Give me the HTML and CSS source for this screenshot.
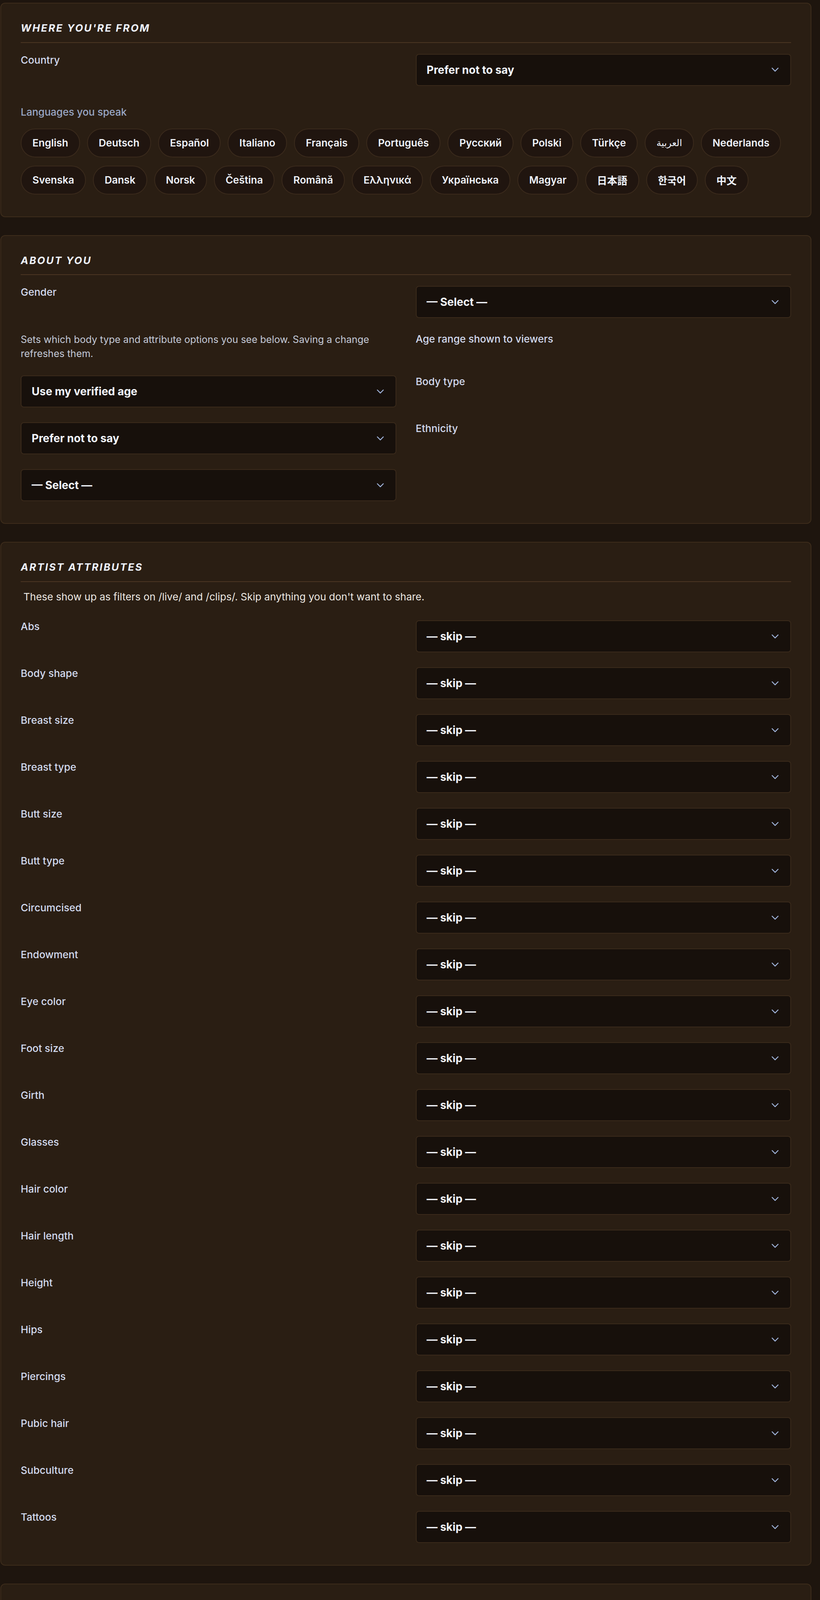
FILE: index.html
```html
<!DOCTYPE html>
<html lang="en">
<head>
<meta charset="utf-8">
<title>Profile</title>
<link rel="stylesheet" href="styles.css">
</head>
<body>
<main class="page">

  <section class="card">
    <h2 class="card-title">Where you're from</h2>
    <div class="grid">
      <div class="label">Country</div>
      <div class="select"><span>Prefer not to say</span><svg class="chev" viewBox="0 0 18 11" width="18" height="11"><polyline points="1.5,1.5 9,9.2 16.5,1.5"/></svg></div>
    </div>
    <div class="langs-label">Languages you speak</div>
    <div class="chips">
      <span class="chip">English</span>
      <span class="chip">Deutsch</span>
      <span class="chip">Español</span>
      <span class="chip">Italiano</span>
      <span class="chip">Français</span>
      <span class="chip">Português</span>
      <span class="chip">Русский</span>
      <span class="chip">Polski</span>
      <span class="chip">Türkçe</span>
      <span class="chip chip-ar" lang="ar">العربية</span>
      <span class="chip">Nederlands</span>
      <span class="chip">Svenska</span>
      <span class="chip">Dansk</span>
      <span class="chip">Norsk</span>
      <span class="chip">Čeština</span>
      <span class="chip">Română</span>
      <span class="chip">Ελληνικά</span>
      <span class="chip">Українська</span>
      <span class="chip">Magyar</span>
      <span class="chip" lang="ja">日本語</span>
      <span class="chip" lang="ko">한국어</span>
      <span class="chip" lang="zh">中文</span>
    </div>
  </section>

  <section class="card">
    <h2 class="card-title">About you</h2>
    <div class="grid">
      <div class="label">Gender</div>
      <div class="select"><span>— Select —</span><svg class="chev" viewBox="0 0 18 11" width="18" height="11"><polyline points="1.5,1.5 9,9.2 16.5,1.5"/></svg></div>
      <p class="hint">Sets which body type and attribute options you see below. Saving a change refreshes them.</p>
      <div class="label">Age range shown to viewers</div>
      <div class="select"><span>Use my verified age</span><svg class="chev" viewBox="0 0 18 11" width="18" height="11"><polyline points="1.5,1.5 9,9.2 16.5,1.5"/></svg></div>
      <div class="label">Body type</div>
      <div class="select"><span>Prefer not to say</span><svg class="chev" viewBox="0 0 18 11" width="18" height="11"><polyline points="1.5,1.5 9,9.2 16.5,1.5"/></svg></div>
      <div class="label">Ethnicity</div>
      <div class="select"><span>— Select —</span><svg class="chev" viewBox="0 0 18 11" width="18" height="11"><polyline points="1.5,1.5 9,9.2 16.5,1.5"/></svg></div>
    </div>
  </section>

  <section class="card">
    <h2 class="card-title">Artist attributes</h2>
    <p class="desc">These show up as filters on /live/ and /clips/. Skip anything you don't want to share.</p>
    <div class="grid">
      <div class="label">Abs</div>
      <div class="select"><span>— skip —</span><svg class="chev" viewBox="0 0 18 11" width="18" height="11"><polyline points="1.5,1.5 9,9.2 16.5,1.5"/></svg></div>
      <div class="label">Body shape</div>
      <div class="select"><span>— skip —</span><svg class="chev" viewBox="0 0 18 11" width="18" height="11"><polyline points="1.5,1.5 9,9.2 16.5,1.5"/></svg></div>
      <div class="label">Breast size</div>
      <div class="select"><span>— skip —</span><svg class="chev" viewBox="0 0 18 11" width="18" height="11"><polyline points="1.5,1.5 9,9.2 16.5,1.5"/></svg></div>
      <div class="label">Breast type</div>
      <div class="select"><span>— skip —</span><svg class="chev" viewBox="0 0 18 11" width="18" height="11"><polyline points="1.5,1.5 9,9.2 16.5,1.5"/></svg></div>
      <div class="label">Butt size</div>
      <div class="select"><span>— skip —</span><svg class="chev" viewBox="0 0 18 11" width="18" height="11"><polyline points="1.5,1.5 9,9.2 16.5,1.5"/></svg></div>
      <div class="label">Butt type</div>
      <div class="select"><span>— skip —</span><svg class="chev" viewBox="0 0 18 11" width="18" height="11"><polyline points="1.5,1.5 9,9.2 16.5,1.5"/></svg></div>
      <div class="label">Circumcised</div>
      <div class="select"><span>— skip —</span><svg class="chev" viewBox="0 0 18 11" width="18" height="11"><polyline points="1.5,1.5 9,9.2 16.5,1.5"/></svg></div>
      <div class="label">Endowment</div>
      <div class="select"><span>— skip —</span><svg class="chev" viewBox="0 0 18 11" width="18" height="11"><polyline points="1.5,1.5 9,9.2 16.5,1.5"/></svg></div>
      <div class="label">Eye color</div>
      <div class="select"><span>— skip —</span><svg class="chev" viewBox="0 0 18 11" width="18" height="11"><polyline points="1.5,1.5 9,9.2 16.5,1.5"/></svg></div>
      <div class="label">Foot size</div>
      <div class="select"><span>— skip —</span><svg class="chev" viewBox="0 0 18 11" width="18" height="11"><polyline points="1.5,1.5 9,9.2 16.5,1.5"/></svg></div>
      <div class="label">Girth</div>
      <div class="select"><span>— skip —</span><svg class="chev" viewBox="0 0 18 11" width="18" height="11"><polyline points="1.5,1.5 9,9.2 16.5,1.5"/></svg></div>
      <div class="label">Glasses</div>
      <div class="select"><span>— skip —</span><svg class="chev" viewBox="0 0 18 11" width="18" height="11"><polyline points="1.5,1.5 9,9.2 16.5,1.5"/></svg></div>
      <div class="label">Hair color</div>
      <div class="select"><span>— skip —</span><svg class="chev" viewBox="0 0 18 11" width="18" height="11"><polyline points="1.5,1.5 9,9.2 16.5,1.5"/></svg></div>
      <div class="label">Hair length</div>
      <div class="select"><span>— skip —</span><svg class="chev" viewBox="0 0 18 11" width="18" height="11"><polyline points="1.5,1.5 9,9.2 16.5,1.5"/></svg></div>
      <div class="label">Height</div>
      <div class="select"><span>— skip —</span><svg class="chev" viewBox="0 0 18 11" width="18" height="11"><polyline points="1.5,1.5 9,9.2 16.5,1.5"/></svg></div>
      <div class="label">Hips</div>
      <div class="select"><span>— skip —</span><svg class="chev" viewBox="0 0 18 11" width="18" height="11"><polyline points="1.5,1.5 9,9.2 16.5,1.5"/></svg></div>
      <div class="label">Piercings</div>
      <div class="select"><span>— skip —</span><svg class="chev" viewBox="0 0 18 11" width="18" height="11"><polyline points="1.5,1.5 9,9.2 16.5,1.5"/></svg></div>
      <div class="label">Pubic hair</div>
      <div class="select"><span>— skip —</span><svg class="chev" viewBox="0 0 18 11" width="18" height="11"><polyline points="1.5,1.5 9,9.2 16.5,1.5"/></svg></div>
      <div class="label">Subculture</div>
      <div class="select"><span>— skip —</span><svg class="chev" viewBox="0 0 18 11" width="18" height="11"><polyline points="1.5,1.5 9,9.2 16.5,1.5"/></svg></div>
      <div class="label">Tattoos</div>
      <div class="select"><span>— skip —</span><svg class="chev" viewBox="0 0 18 11" width="18" height="11"><polyline points="1.5,1.5 9,9.2 16.5,1.5"/></svg></div>
    </div>
  </section>

  <section class="card">
    <h2 class="card-title">Tell viewers about yourself</h2>
    <p class="desc desc-bio">A short intro that shows on your storefront and live cards. Plain-text only — keep it conversational.</p>
    <label class="label bio-label" for="bio">Bio</label>
    <textarea id="bio" class="bio" placeholder="Hey, I'm..."></textarea>
    <div class="counter">0 / 800 characters</div>
  </section>

</main>
</body>
</html>
```

FILE: styles.css
```css
html, body {
  margin: 0;
  background: #1e150e;
}

body {
  font-family: Inter, "Noto Sans CJK SC", "DejaVu Sans", sans-serif;
  color: #f3f6fc;
}

.page {
  display: flex;
  flex-direction: column;
  gap: 46px;
  padding: 7px 22px 20px 1px;
}

.card {
  background: #2a1e13;
  border: 2px solid #3d2c1b;
  border-radius: 12px;
  padding: 47px 50px 56px;
}

.card-title {
  margin: 0 0 28px;
  padding-bottom: 20px;
  border-bottom: 2px solid #4a3522;
  font-size: 26px;
  line-height: 31.5px;
  font-weight: 700;
  font-style: italic;
  letter-spacing: 0.11em;
  text-transform: uppercase;
  color: #eef2fb;
}

.grid {
  display: grid;
  grid-template-columns: 1fr 1fr;
  column-gap: 50px;
  row-gap: 38px;
  align-items: start;
}

.label {
  display: block;
  font-size: 26px;
  font-weight: 500;
  line-height: 31.5px;
  color: #d3dbef;
}

.select {
  height: 82px;
  box-sizing: border-box;
  display: flex;
  align-items: center;
  justify-content: space-between;
  padding: 0 30px 0 26px;
  border: 2px solid #3a2a1b;
  border-radius: 8px;
  background: #17100b;
  font-size: 28px;
  font-weight: 700;
  color: #f3f6fc;
}

.chev {
  flex: none;
  fill: none;
  stroke: #9fb3d9;
  stroke-width: 2.5;
  stroke-linecap: round;
  stroke-linejoin: round;
}

.hint {
  margin: 0;
  font-size: 25px;
  line-height: 35.5px;
  color: #c4cad8;
}

.langs-label {
  margin: 51px 0 27px;
  font-size: 26px;
  font-weight: 500;
  line-height: 31.5px;
  color: #9aa8c6;
}

.chips {
  display: flex;
  flex-wrap: wrap;
  column-gap: 18px;
  row-gap: 21.5px;
}

.chip {
  height: 73.5px;
  box-sizing: border-box;
  display: inline-flex;
  align-items: center;
  padding: 0 28px;
  border: 2px solid #3a2a1c;
  border-radius: 999px;
  background: #20150f;
  font-size: 26px;
  font-weight: 600;
  color: #f0f4fc;
}

.chip-ar {
  font-size: 24px;
  font-weight: 400;
}

.desc {
  margin: -6px 0 45px;
  padding-left: 7px;
  font-size: 26px;
  line-height: 31.5px;
  color: #ece8e2;
}

.desc-bio {
  margin-bottom: 52px;
}

.bio-label {
  margin-bottom: 5.5px;
}

.bio {
  display: block;
  width: 100%;
  height: 219px;
  box-sizing: border-box;
  margin: 0;
  padding: 23px 28px;
  border: 2px solid #3d2b1b;
  border-radius: 8px;
  background: #1f150e;
  font-family: inherit;
  font-size: 28px;
  font-weight: 700;
  color: #f3f6fc;
  outline: none;
}

.bio::placeholder {
  color: #7b7b7b;
}

.counter {
  margin-top: 6.5px;
  font-size: 24px;
  line-height: 36px;
  font-weight: 600;
  color: #c2cadb;
}
```
